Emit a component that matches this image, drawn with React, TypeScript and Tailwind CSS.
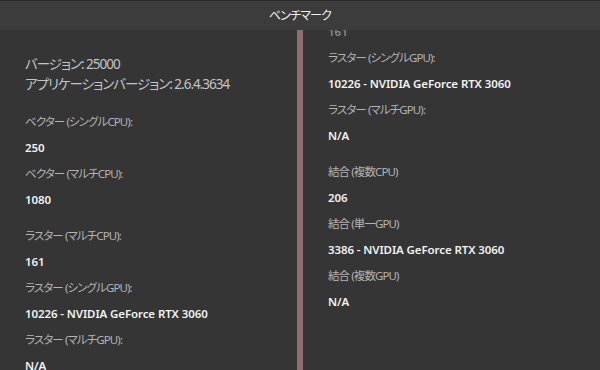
import React from "react";

type Entry = { label: string; value: string };

const font = {
  fontFamily: '"Noto Sans", "Noto Sans CJK JP", sans-serif',
};

const rasterGroup: Entry[] = [
  { label: "ラスター (マルチCPU):", value: "161" },
  { label: "ラスター (シングルGPU):", value: "10226 - NVIDIA GeForce RTX 3060" },
  { label: "ラスター (マルチGPU):", value: "N/A" },
];

const vectorGroup: Entry[] = [
  { label: "ベクター (シングルCPU):", value: "250" },
  { label: "ベクター (マルチCPU):", value: "1080" },
];

const combinedGroup: Entry[] = [
  { label: "結合 (複数CPU)", value: "206" },
  { label: "結合 (単一GPU)", value: "3386 - NVIDIA GeForce RTX 3060" },
  { label: "結合 (複数GPU)", value: "N/A" },
];

const Row = ({ entry }: { entry: Entry }) => (
  <>
    <div className="h-[26px] flex items-center text-[11.5px] tracking-[-0.9px] text-[#b3b3b3] whitespace-nowrap">
      {entry.label}
    </div>
    <div className="h-[26px] flex items-center text-[11.5px] tracking-[-0.1px] font-semibold text-[#f2f2f2] whitespace-nowrap">
      {entry.value}
    </div>
  </>
);

const App = () => {
  return (
    <section
      className="w-[600px] h-[370px] flex flex-col bg-[#353535] overflow-hidden [font-feature-settings:'palt']"
      style={font}
    >
      <div className="h-[30px] shrink-0 flex items-center justify-center bg-[#3c3c3c] border-t border-t-[#2a2a2a] text-[12px] tracking-[-0.8px] text-[#f0f0f0]">
        ベンチマーク
      </div>
      <div className="flex-1 flex flex-row min-h-0">
        {/* left pane */}
        <div className="w-[297px] shrink-0 overflow-hidden pl-[25px] pt-[24px]">
          <div className="h-[20px] flex items-center text-[13.5px] tracking-[-1px] text-[#c4c4c4]">
            バージョン: 25000
          </div>
          <div className="h-[20px] flex items-center text-[13.5px] tracking-[-1px] text-[#c4c4c4] whitespace-nowrap">
            アプリケーションバージョン: 2.6.4.3634
          </div>
          <div className="mt-[15px]">
            {vectorGroup.map((e) => (
              <Row key={e.label} entry={e} />
            ))}
          </div>
          <div className="mt-[10px]">
            {rasterGroup.map((e) => (
              <Row key={e.label} entry={e} />
            ))}
          </div>
        </div>

        <div className="w-[6px] shrink-0 bg-[#8f6e6e]" />

        {/* right pane, scrolled down; the top row fades under the header */}
        <div className="flex-1 overflow-hidden pl-[25px]">
          <div className="mt-[-11px]">
            <div className="h-[26px] flex items-center text-[11.5px] font-semibold text-[#8a8a8a]">
              {rasterGroup[0].value}
            </div>
            <Row entry={rasterGroup[1]} />
            <Row entry={rasterGroup[2]} />
            <div className="mt-[10px]">
              {combinedGroup.map((e) => (
                <Row key={e.label} entry={e} />
              ))}
            </div>
          </div>
        </div>
      </div>
    </section>
  );
};

export default App;
